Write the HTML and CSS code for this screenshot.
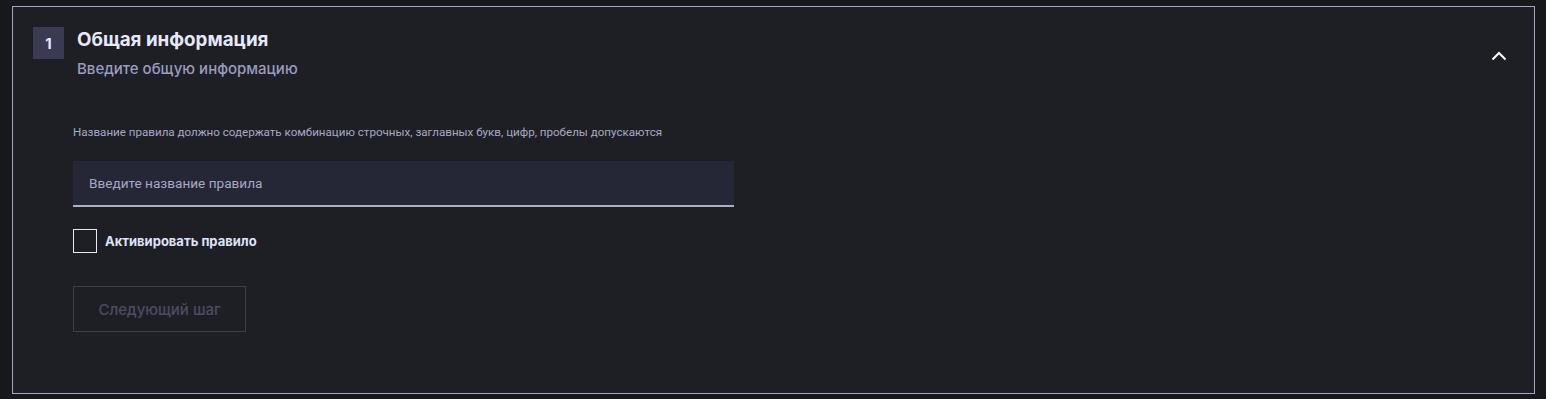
FILE: index.html
```html
<!DOCTYPE html>
<html lang="ru">
<head>
<meta charset="utf-8">
<link rel="stylesheet" href="styles.css">
</head>
<body>
<section class="panel">
  <header class="head">
    <div class="badge">1</div>
    <div class="titles">
      <h2 class="title">Общая информация</h2>
      <p class="subtitle">Введите общую информацию</p>
    </div>
    <button class="toggle" aria-label="Свернуть">
      <svg width="16" height="10" viewBox="0 0 16 10"><path d="M1.5 8.5 L8 2 L14.5 8.5" fill="none" stroke="#ffffff" stroke-width="2"/></svg>
    </button>
  </header>
  <div class="body">
    <p class="hint">Название правила должно содержать комбинацию строчных, заглавных букв, цифр, пробелы допускаются</p>
    <input class="field" type="text" placeholder="Введите название правила">
    <label class="check">
      <span class="box"></span>
      <span class="check-label">Активировать правило</span>
    </label>
    <button class="next" disabled>Следующий шаг</button>
  </div>
</section>
</body>
</html>
```

FILE: styles.css
```css
html, body {
  margin: 0;
  padding: 0;
  background: #17181c;
}
body {
  padding: 6px 11px 5px 12px;
  font-family: Inter, "Noto Sans", sans-serif;
}
.panel {
  border: 1px solid #a3a6bd;
  background: #1e1f24;
  height: 388px;
  box-sizing: border-box;
}
.head {
  display: flex;
  align-items: flex-start;
  padding: 20px 0 0 20px;
}
.badge {
  width: 31px;
  height: 32px;
  background: #3a3b52;
  color: #e8eaf8;
  font-weight: 700;
  font-size: 15px;
  display: flex;
  align-items: center;
  justify-content: center;
}
.titles {
  margin-left: 13px;
  flex: 1;
}
.title {
  margin: 0;
  font-size: 18.8px;
  font-weight: 700;
  color: #e6e8fb;
  line-height: 26px;
}
.subtitle {
  margin: 6px 0 0;
  font-size: 15px;
  font-weight: 500;
  color: #9a9cc0;
  line-height: 20px;
}
.toggle {
  background: none;
  border: none;
  padding: 0;
  margin: 24px 27px 0 0;
  width: 16px;
  height: 10px;
  display: flex;
}
.body {
  padding: 46px 0 0 60px;
}
.hint {
  margin: 0;
  font-family: Roboto, sans-serif;
  font-size: 11.6px;
  color: #a6a9c4;
  line-height: 14px;
}
.field {
  display: block;
  margin-top: 22px;
  width: 661px;
  height: 46px;
  box-sizing: border-box;
  background: #262736;
  border: none;
  border-bottom: 2px solid #a8b0c8;
  padding: 0 16px;
  font-family: Roboto, sans-serif;
  font-size: 13.6px;
  color: #e8eaf8;
  outline: none;
}
.field::placeholder {
  color: #a6a9c4;
}
.check {
  display: flex;
  align-items: center;
  margin-top: 22px;
  gap: 8px;
}
.box {
  width: 24px;
  height: 24px;
  box-sizing: border-box;
  border: 1px solid #e6e8f4;
}
.check-label {
  font-size: 13px;
  font-weight: 700;
  color: #dfe3f8;
}
.next {
  margin-top: 33px;
  width: 173px;
  height: 46px;
  background: transparent;
  border: 1px solid #3d3e4c;
  color: #4b4c62;
  font-family: Inter, "Noto Sans", sans-serif;
  font-size: 15px;
  font-weight: 500;
}
```
